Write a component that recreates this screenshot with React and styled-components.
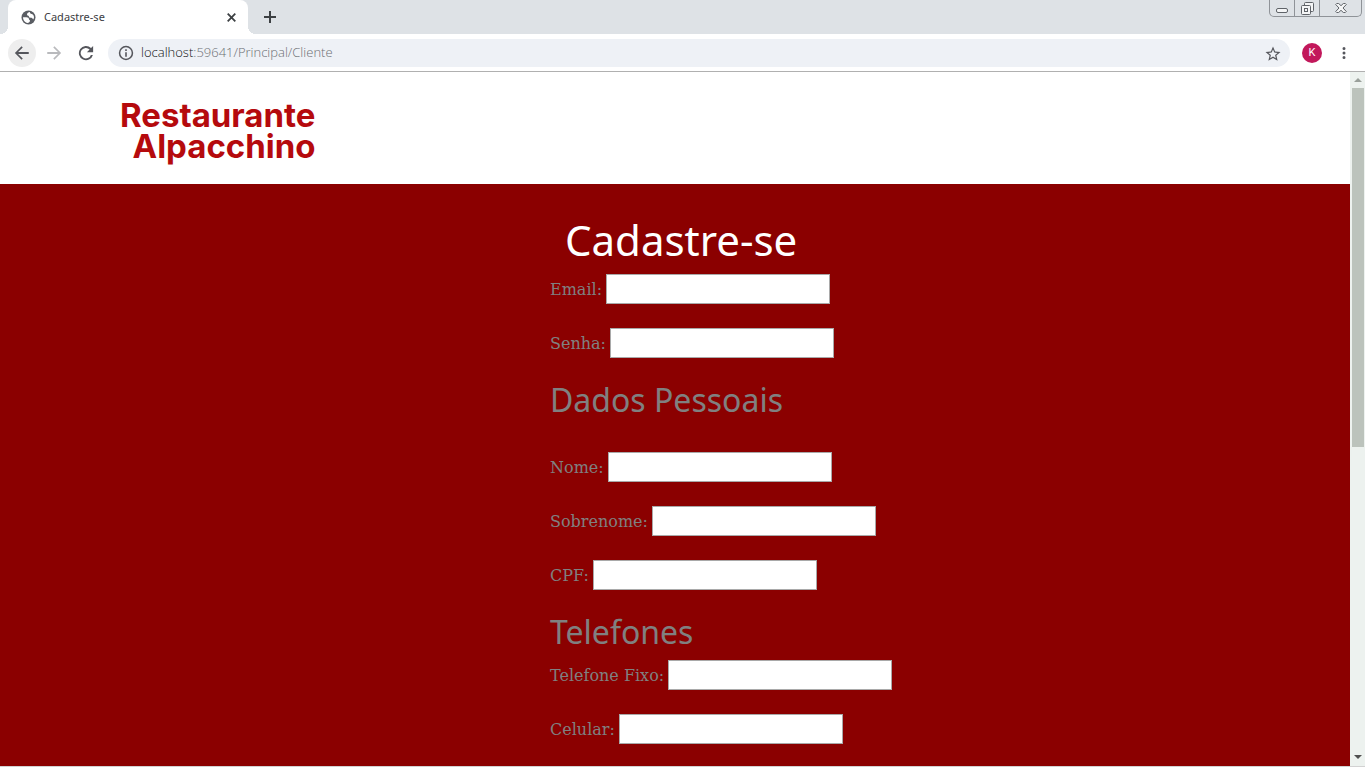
import React from "react";
import styled, { createGlobalStyle } from "styled-components";

const GlobalStyle = createGlobalStyle`
  * { box-sizing: border-box; }
  body { margin: 0; background: #fff; }
  button { border: 0; padding: 0; background: none; font: inherit; color: inherit; }
  svg { display: block; }
`;

const Window = styled.div`
  display: flex;
  flex-direction: column;
  height: 100vh;
  overflow: hidden;
  border-bottom: 1px solid #d2d2d2;
`;

const TabStrip = styled.div`
  display: flex;
  flex: none;
  height: 34px;
  padding-left: 8px;
  background: #dee2e6;
`;

const Tab = styled.div`
  display: flex;
  align-items: center;
  position: relative;
  width: 240px;
  padding: 0 11px 0 13px;
  border-radius: 8px 8px 0 0;
  background: #fff;
  color: #3c4043;

  &::before,
  &::after {
    content: "";
    position: absolute;
    bottom: 0;
    width: 8px;
    height: 8px;
  }
  &::before {
    right: 100%;
    background: radial-gradient(circle at 0 0, transparent 8px, #fff 8px);
  }
  &::after {
    left: 100%;
    background: radial-gradient(circle at 100% 0, transparent 8px, #fff 8px);
  }
`;

const TabTitle = styled.span`
  flex: 1;
  margin-left: 8px;
  padding-bottom: 2px;
  font: 11px "Noto Sans", sans-serif;
`;

const IconButton = styled.button`
  display: grid;
  place-items: center;
  flex: none;
  width: ${(p) => p.$size || 28}px;
  height: ${(p) => p.$size || 28}px;
  border-radius: 50%;
  background: ${(p) => (p.$active ? "#eeeeee" : "transparent")};
  color: ${(p) => p.$color || "#55565c"};
`;

const NewTab = styled(IconButton)`
  align-self: center;
  margin-left: 8px;
`;

const WindowControls = styled.div`
  display: flex;
  height: 17px;
  margin: 0 3px 0 auto;
  border: 1px solid #8f9398;
  border-top: 0;
  border-radius: 0 0 5px 5px;
`;

const WindowButton = styled.button`
  display: grid;
  justify-content: center;
  align-content: start;
  padding-top: ${(p) => p.$top || 0}px;
  width: ${(p) => p.$width}px;
  color: #5f6368;

  & + & {
    border-left: 1px solid #8f9398;
  }
`;

const Toolbar = styled.div`
  display: flex;
  align-items: center;
  flex: none;
  gap: 4px;
  height: 38px;
  padding: 0 11px 0 8px;
  border-bottom: 1px solid #b0b0b0;
  background: #fff;
`;

const AddressBar = styled.div`
  display: flex;
  align-items: center;
  flex: 1;
  height: 28px;
  margin-left: 4px;
  padding: 0 10px;
  border-radius: 14px;
  background: #eef1f6;
  color: #55565c;
`;

const Address = styled.div`
  flex: 1;
  margin-left: 7px;
  padding-bottom: 2px;
  font: 300 13px "Open Sans", sans-serif;
  color: #6c6f73;

  span {
    color: #101114;
  }
`;

const Avatar = styled.button`
  width: 20px;
  height: 20px;
  margin: 0 8px;
  border-radius: 50%;
  background: #c2185b;
  color: #fff;
  font: 11px Roboto, sans-serif;
`;

const Viewport = styled.div`
  display: flex;
  flex: 1;
  min-height: 0;
`;

const Page = styled.div`
  display: flex;
  flex-direction: column;
  flex: 1;
  overflow: hidden;
`;

const Header = styled.header`
  display: flex;
  flex: none;
  padding: 28px 120px 22px;
  background: #fff;
`;

const Logo = styled.a`
  color: #b50a0d;
  font: 700 33px/31px Inter, sans-serif;
  text-align: right;
  text-decoration: none;

  span {
    display: block;
  }
`;

const Main = styled.main`
  flex: 1 0 auto;
  padding-top: 32px;
  background: #8b0000;
  color: #808080;
`;

const Form = styled.form`
  width: 250px;
  margin: 0 auto;
  white-space: nowrap;
`;

const Title = styled.h1`
  margin: 0 0 10px;
  padding-left: 15px;
  color: #fff;
  font: 400 42px/48px "Noto Sans", sans-serif;
`;

const SectionTitle = styled.h2`
  margin: 0 0 ${(p) => (p.$spaced ? 34 : 10)}px;
  font: 400 32px/36px "Noto Sans", sans-serif;
`;

const Field = styled.div`
  display: flex;
  align-items: center;
  gap: 4px;
  margin-bottom: 24px;
  font: 16px/30px "DejaVu Serif", serif;

  label {
    height: 30px;
    line-height: 32px;
  }
`;

const TextInput = styled.input`
  flex: none;
  width: 224px;
  height: 30px;
  padding: 2px 4px;
  border: 1px solid #a9a9a9;
  background: #fff;
  font: inherit;
`;

const Scrollbar = styled.div`
  display: flex;
  flex-direction: column;
  align-items: center;
  flex: none;
  width: 15px;
  background: #edf2ef;
`;

const ScrollArrow = styled.div`
  display: grid;
  place-items: center;
  width: 15px;
  height: 16px;
  color: ${(p) => p.$color};
`;

const Track = styled.div`
  flex: 1;
  width: 12px;
`;

const Thumb = styled.div`
  height: 54.2%;
  background: #bcc3bc;
`;

const Icon = ({ d, size = 18, box = 24 }) => (
  <svg width={size} height={size} viewBox={`0 0 ${box} ${box}`} fill="currentColor" aria-hidden="true">
    <path d={d} />
  </svg>
);

const BACK = "M21 10.800H6.800l6.200-6.200L11.400 3 2.500 12l8.900 9 1.600-1.600-6.200-6.200H21z";
const FORWARD = "M3 10.800h14.200L11 4.600 12.600 3l8.900 9-8.900 9-1.600-1.600 6.200-6.200H3z";
const RELOAD =
  "M18.700 5.300A9.500 9.500 0 1 0 21.200 14.500h-2.700a7 7 0 1 1-1.700-7.300L13.200 11H21.500V2.500z";
const INFO =
  "M10.800 6.500h2.400v2.400h-2.400zM10.800 10.700h2.400v6.800h-2.400zM12 1.200a10.800 10.800 0 1 0 0 21.600 10.800 10.800 0 0 0 0-21.600zM12 20.500a8.500 8.500 0 1 1 0-17 8.500 8.500 0 0 1 0 17z";
const STAR =
  "M22 9.240l-7.190-.620L12 2 9.190 8.630 2 9.240l5.460 4.730L5.820 21 12 17.270 18.180 21l-1.630-7.030L22 9.240zM12 15.400l-3.760 2.270 1-4.280-3.320-2.880 4.380-.380L12 6.100l1.710 4.040 4.380.380-3.320 2.880 1 4.280L12 15.400z";
const MORE =
  "M12 8a2 2 0 1 0 0-4 2 2 0 0 0 0 4zM12 14a2 2 0 1 0 0-4 2 2 0 0 0 0 4zM12 20a2 2 0 1 0 0-4 2 2 0 0 0 0 4z";

const Globe = () => (
  <svg width="15" height="15" viewBox="0 0 15 15" aria-hidden="true">
    <circle cx="7.500" cy="7.500" r="7" fill="#5a5d63" />
    <path
      fill="#fff"
      d="M6 4.300C6 3 7.500 2 9 2c-.3 1.200.4 1.700 1.800 2 1.500.4 2.200 1.700 2.200 3.500 0 .8-.4 1.500-.8 2-.5-1.300-1.300-1.800-2.500-1.800C8 7.700 7.500 7 8 6 6.800 6 6 5.500 6 4.300zM2 7.200h3.500c1.500 0 2.500.8 2.500 2 0 .8 1 .6 1 1.600 0 1.200-1.200 2.200-2.500 2.200C4 12.600 2 10 2 7.200z"
    />
  </svg>
);

const Cross = () => (
  <svg width="9" height="9" viewBox="0 0 9 9" stroke="currentColor" strokeWidth="1.800" aria-hidden="true">
    <path d="M.7.7l7.600 7.600M8.300.7L.7 8.300" />
  </svg>
);

const Plus = () => (
  <svg width="12" height="12" viewBox="0 0 12 12" stroke="currentColor" strokeWidth="2" aria-hidden="true">
    <path d="M6 0v12M0 6h12" />
  </svg>
);

const Outline = ({ width, height, children }) => (
  <svg width={width} height={height} viewBox={`0 0 ${width} ${height}`} fill="#f4f5f6" stroke="currentColor" aria-hidden="true">
    {children}
  </svg>
);

const LabeledField = ({ id, label, type = "text" }) => (
  <Field>
    <label htmlFor={id}>{label}</label>
    <TextInput id={id} name={id} type={type} />
  </Field>
);

export default function App() {
  return (
    <Window>
      <GlobalStyle />
      <TabStrip>
        <Tab>
          <Globe />
          <TabTitle>Cadastre-se</TabTitle>
          <IconButton type="button" $size={11} $color="#3c4043" aria-label="Fechar guia">
            <Cross />
          </IconButton>
        </Tab>
        <NewTab type="button" $color="#3c4043" aria-label="Nova guia">
          <Plus />
        </NewTab>
        <WindowControls>
          <WindowButton type="button" $width={24} $top={8} aria-label="Minimizar">
            <Outline width={12} height={5}>
              <rect x=".5" y=".5" width="11" height="4" rx="1.500" />
            </Outline>
          </WindowButton>
          <WindowButton type="button" $width={25} $top={2} aria-label="Restaurar">
            <Outline width={13} height={13}>
              <rect x="3.500" y=".5" width="9" height="9" rx="1" />
              <rect x=".5" y="3.500" width="9" height="9" rx="1" />
              <rect x="3.500" y="6.500" width="3" height="3" />
            </Outline>
          </WindowButton>
          <WindowButton type="button" $width={42} $top={3} aria-label="Fechar">
            <Outline width={12} height={10}>
              <path d="M.7 1.500l1-1h2L6 2.700 8.300.5h2l1 1L8 5l3.300 3.500-1 1h-2L6 7.300 3.700 9.500h-2l-1-1L4 5z" />
            </Outline>
          </WindowButton>
        </WindowControls>
      </TabStrip>

      <Toolbar>
        <IconButton type="button" $active aria-label="Voltar">
          <Icon d={BACK} />
        </IconButton>
        <IconButton type="button" $color="#b9babd" aria-label="Avançar">
          <Icon d={FORWARD} />
        </IconButton>
        <IconButton type="button" aria-label="Recarregar">
          <Icon d={RELOAD} />
        </IconButton>
        <AddressBar>
          <Icon d={INFO} size={16} />
          <Address>
            <span>localhost</span>:59641/Principal/Cliente
          </Address>
          <IconButton type="button" $size={16} aria-label="Adicionar aos favoritos">
            <Icon d={STAR} />
          </IconButton>
        </AddressBar>
        <Avatar type="button">K</Avatar>
        <IconButton type="button" $size={20} aria-label="Menu">
          <Icon d={MORE} />
        </IconButton>
      </Toolbar>

      <Viewport>
        <Page>
          <Header>
            <Logo href="#">
              <span>Restaurante</span>
              <span>Alpacchino</span>
            </Logo>
          </Header>
          <Main>
            <Form>
              <Title>Cadastre-se</Title>
              <LabeledField id="email" label="Email:" />
              <LabeledField id="senha" label="Senha:" type="password" />
              <SectionTitle $spaced>Dados Pessoais</SectionTitle>
              <LabeledField id="nome" label="Nome:" />
              <LabeledField id="sobrenome" label="Sobrenome:" />
              <LabeledField id="cpf" label="CPF:" />
              <SectionTitle>Telefones</SectionTitle>
              <LabeledField id="telefone" label="Telefone Fixo:" type="tel" />
              <LabeledField id="celular" label="Celular:" type="tel" />
            </Form>
          </Main>
        </Page>
        <Scrollbar>
          <ScrollArrow $color="#9aa09b">
            <Icon d="M4 2l4 4H0z" size={8} box={8} />
          </ScrollArrow>
          <Track>
            <Thumb />
          </Track>
          <ScrollArrow $color="#505050">
            <Icon d="M0 1h8l-4 4z" size={8} box={8} />
          </ScrollArrow>
        </Scrollbar>
      </Viewport>
    </Window>
  );
}
